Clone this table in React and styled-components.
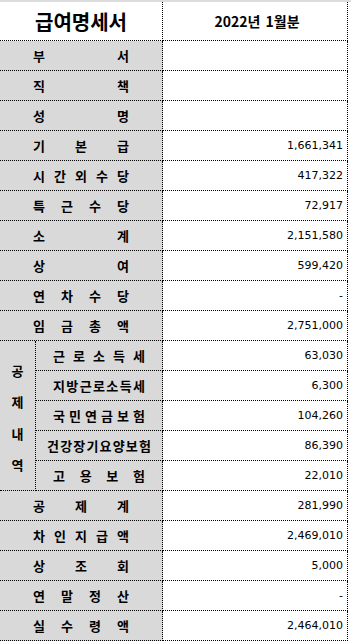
import { Fragment } from "react";
import styled, { createGlobalStyle } from "styled-components";

const GlobalStyle = createGlobalStyle`
  html, body {
    margin: 0;
    padding: 0;
    background: #ffffff;
  }
  body {
    font-family: "Noto Sans CJK KR", "Noto Sans", sans-serif;
    color: #000;
  }
`;

const TopBar = styled.div`
  height: 2px;
  background: #dcdcdc;
`;

const Sheet = styled.div`
  display: grid;
  width: 348px;
  grid-template-columns: 36px 127px 185px;
  grid-auto-rows: 30px;
  grid-template-rows: 39px;
`;

const Cell = styled.div`
  box-sizing: border-box;
  border-bottom: 1px dotted #000;
  border-right: 1px dotted #000;
  display: flex;
  align-items: center;
`;

const Title = styled(Cell)`
  grid-column: span 2;
  justify-content: center;
  font-size: 20px;
  font-weight: 700;
`;

const Period = styled(Cell)`
  justify-content: center;
  font-size: 14px;
  font-weight: 700;
  padding-left: 4px;
  word-spacing: 2px;
`;

const Label = styled(Cell)`
  grid-column: ${(p) => (p.$sub ? "span 1" : "span 2")};
  background: #d9d9d9;
  justify-content: space-between;
  padding: 0 ${(p) => p.$pad}px;
  font-size: 13px;
  font-weight: 700;
  line-height: 1;
`;

const Group = styled(Cell)`
  grid-row: span 5;
  background: #d9d9d9;
  flex-direction: column;
  justify-content: space-evenly;
  font-size: 13px;
  font-weight: 700;
  line-height: 1;
  padding-top: 4px;
`;

const Value = styled(Cell)`
  justify-content: flex-end;
  padding-right: 4px;
  font-family: "DejaVu Sans", "Liberation Sans", sans-serif;
  font-size: 11px;
`;

const rows = [
  { label: "부서", value: "" },
  { label: "직책", value: "" },
  { label: "성명", value: "" },
  { label: "기본급", value: "1,661,341" },
  { label: "시간외수당", value: "417,322" },
  { label: "특근수당", value: "72,917" },
  { label: "소계", value: "2,151,580" },
  { label: "상여", value: "599,420" },
  { label: "연차수당", value: "-" },
  { label: "임금총액", value: "2,751,000" },
];

const deductions = [
  { label: "근로소득세", value: "63,030", pad: 17 },
  { label: "지방근로소득세", value: "6,300", pad: 17 },
  { label: "국민연금보험", value: "104,260", pad: 17 },
  { label: "건강장기요양보험", value: "86,390", pad: 11 },
  { label: "고용보험", value: "22,010", pad: 17 },
];

const totals = [
  { label: "공제계", value: "281,990" },
  { label: "차인지급액", value: "2,469,010" },
  { label: "상조회", value: "5,000" },
  { label: "연말정산", value: "-" },
  { label: "실수령액", value: "2,464,010" },
];

function Spread({ text }) {
  return text.split("").map((ch, i) => <span key={i}>{ch}</span>);
}

function Row({ label, value }) {
  return (
    <>
      <Label $pad={33}>
        <Spread text={label} />
      </Label>
      <Value>{value}</Value>
    </>
  );
}

export default function App() {
  return (
    <>
      <GlobalStyle />
      <TopBar />
      <Sheet>
        <Title>급여명세서</Title>
        <Period>2022년 1월분</Period>
        {rows.map((r) => (
          <Row key={r.label} {...r} />
        ))}
        {deductions.map((d, i) => (
          <Fragment key={d.label}>
            {i === 0 && (
              <Group>
                <Spread text="공제내역" />
              </Group>
            )}
            <Label $sub $pad={d.pad}>
              <Spread text={d.label} />
            </Label>
            <Value>{d.value}</Value>
          </Fragment>
        ))}
        {totals.map((r) => (
          <Row key={r.label} {...r} />
        ))}
      </Sheet>
    </>
  );
}
